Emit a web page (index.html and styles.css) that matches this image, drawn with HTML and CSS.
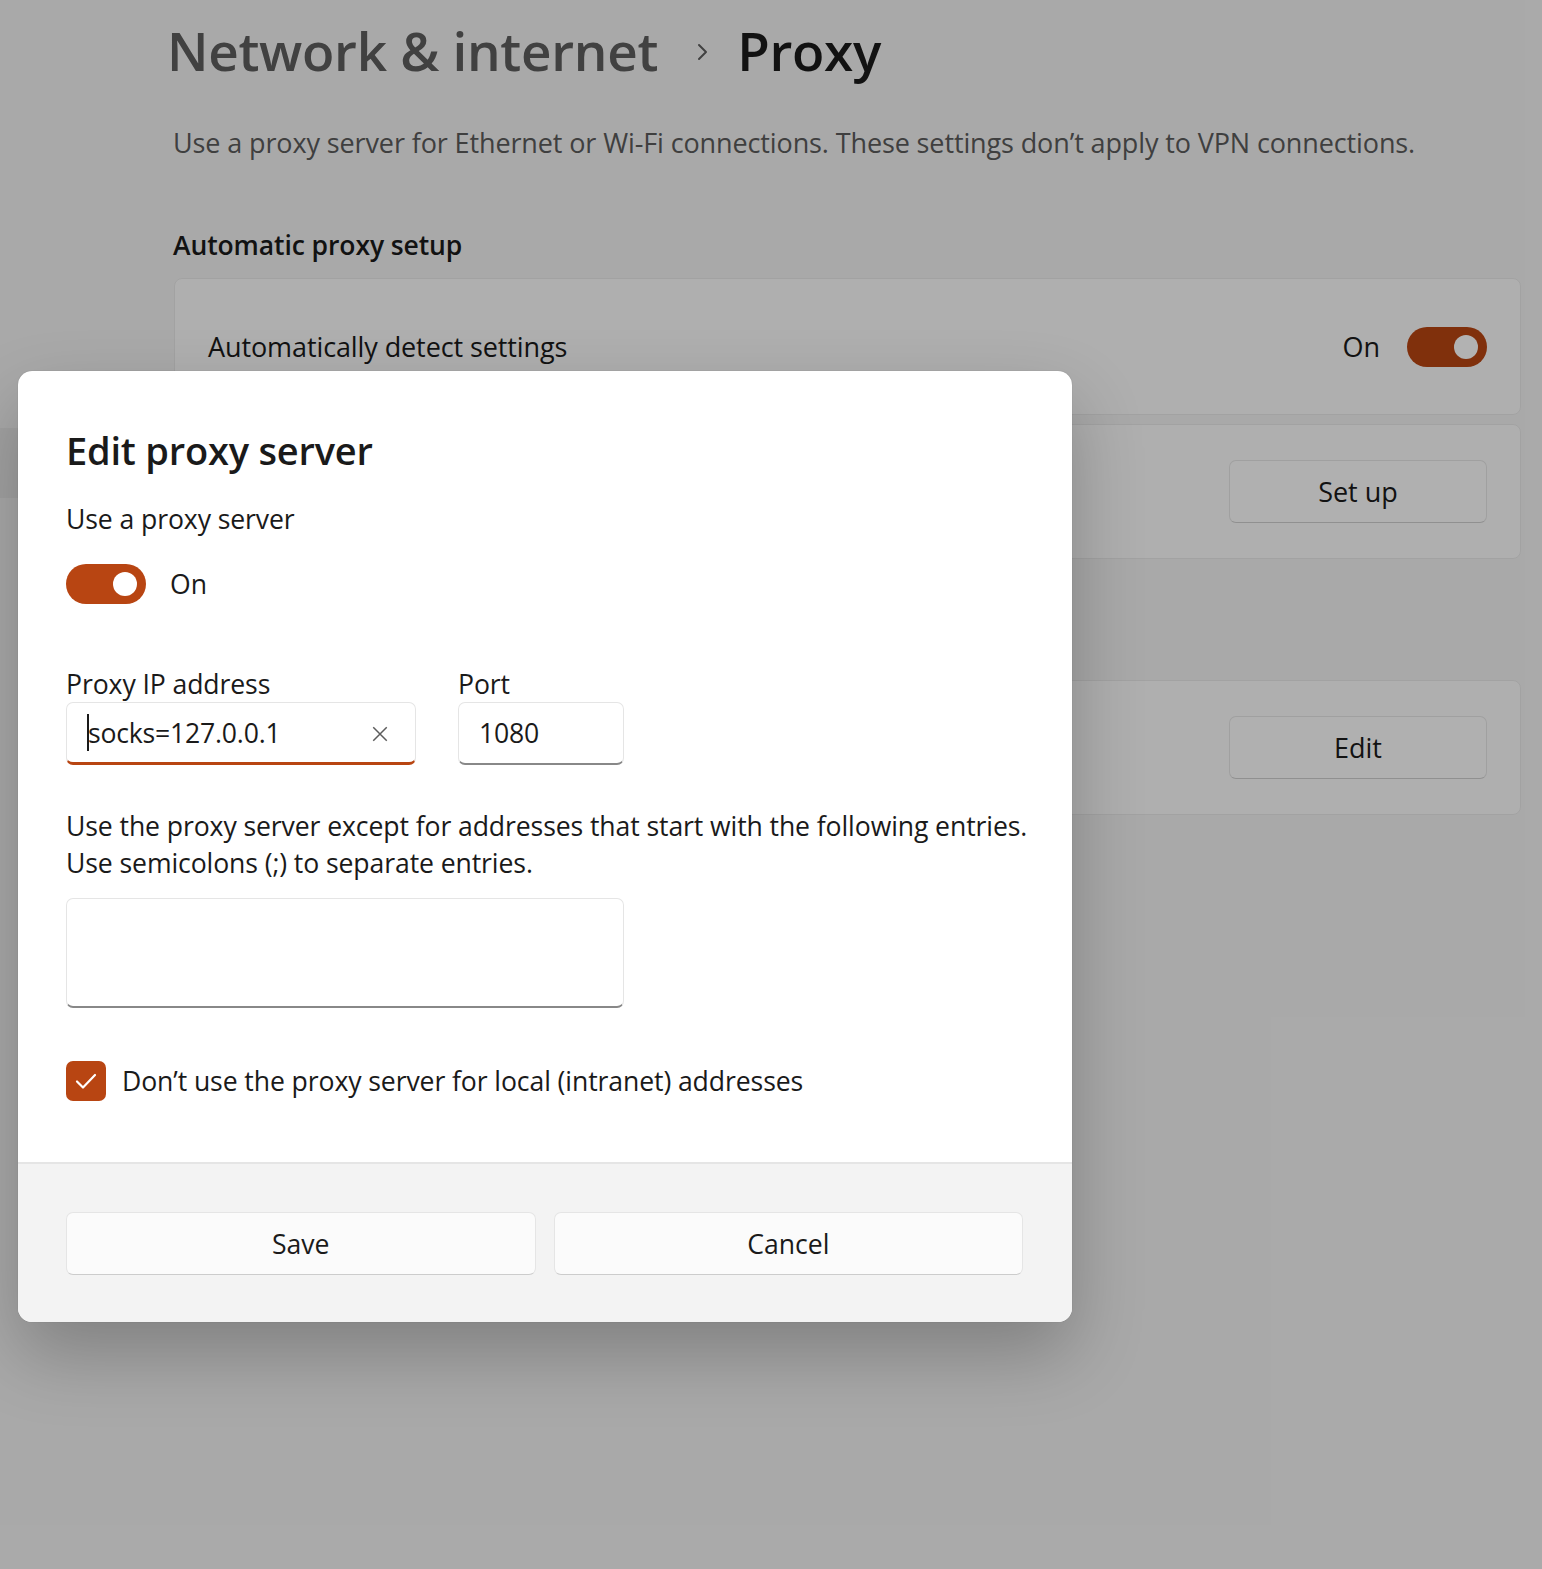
FILE: index.html
```html
<!DOCTYPE html>
<html lang="en">
<head>
<meta charset="utf-8">
<title>Proxy</title>
<link rel="stylesheet" href="styles.css">
</head>
<body>
<div class="app">
  <nav class="nav">
    <div class="nav-item"></div>
  </nav>
  <main class="main">
    <h1 class="crumbs">
      <span class="crumb-parent">Network &amp; internet</span>
      <svg class="chev" viewBox="0 0 16 24" width="16" height="24"><path d="M4 5 L11 12 L4 19" fill="none" stroke="currentColor" stroke-width="2" stroke-linecap="round" stroke-linejoin="round"/></svg>
      <span class="crumb-current">Proxy</span>
    </h1>
    <p class="desc">Use a proxy server for Ethernet or Wi-Fi connections. These settings don’t apply to VPN connections.</p>
    <h2 class="section">Automatic proxy setup</h2>
    <div class="card">
      <span class="card-label">Automatically detect settings</span>
      <div class="card-ctl"><span class="state">On</span><span class="toggle bg-toggle"><span class="knob"></span></span></div>
    </div>
    <div class="card card-b card-end">
      <button class="btn-bg">Set up</button>
    </div>
    <div class="section-gap"></div>
    <div class="card card-b card-end">
      <button class="btn-bg">Edit</button>
    </div>
  </main>
  <div class="overlay"></div>
  <div class="dialog">
    <div class="dlg-body">
      <h2 class="dlg-title">Edit proxy server</h2>
      <div class="dlg-label">Use a proxy server</div>
      <div class="toggle-row"><span class="toggle dlg-toggle"><span class="knob"></span></span><span class="toggle-text">On</span></div>
      <div class="fields">
        <div class="field">
          <div class="field-label">Proxy IP address</div>
          <div class="input input-focus"><span class="caret"></span><span class="input-text">socks=127.0.0.1</span>
            <svg class="clear" viewBox="0 0 16 16" width="18" height="18"><path d="M2 2 L14 14 M14 2 L2 14" stroke="#5c5c5c" stroke-width="1.3" fill="none"/></svg>
          </div>
        </div>
        <div class="field">
          <div class="field-label">Port</div>
          <div class="input input-port"><span class="input-text">1080</span></div>
        </div>
      </div>
      <p class="dlg-para">Use the proxy server except for addresses that start with the following entries.<br>Use semicolons (;) to separate entries.</p>
      <div class="textarea"></div>
      <div class="check-row">
        <span class="checkbox"><svg viewBox="0 0 40 40" width="40" height="40"><path d="M11 20.5 L17 26.5 L29 14" fill="none" stroke="#fff" stroke-width="2.2" stroke-linecap="round" stroke-linejoin="round"/></svg></span>
        <span class="check-text">Don’t use the proxy server for local (intranet) addresses</span>
      </div>
    </div>
    <div class="dlg-footer">
      <button class="btn">Save</button>
      <button class="btn">Cancel</button>
    </div>
  </div>
</div>
</body>
</html>
```
FILE: styles.css
```css
* { box-sizing: border-box; }
html, body { margin: 0; padding: 0; }
body {
  width: 1542px;
  height: 1569px;
  overflow: hidden;
  background: #f3f3f3;
  font-family: "Open Sans", "Noto Sans", sans-serif;
  color: #1a1a1a;
}
.app {
  position: relative;
  display: flex;
  width: 1542px;
  height: 1569px;
}
.nav {
  width: 160px;
  flex: none;
  padding-top: 428px;
}
.nav-item {
  height: 70px;
  background: #e9e9e9;
}
.main {
  flex: 1;
  padding: 13px 21px 0 7px;
}
.crumbs {
  margin: 0;
  display: flex;
  align-items: center;
  font-size: 53px;
  font-weight: 600;
  line-height: 76px;
  letter-spacing: -0.3px;
}
.crumb-parent { color: #5d5d5d; }
.crumb-current { color: #1a1a1a; }
.chev { color: #5d5d5d; margin: 2px 26px 0 37px; }
.desc {
  margin: 36px 0 0 6px;
  font-size: 27px;
  line-height: 36px;
  color: #5b5b5b;
  letter-spacing: -0.12px;
}
.section {
  margin: 66px 0 0 6px;
  font-size: 26.5px;
  font-weight: 600;
  line-height: 36px;
  letter-spacing: -0.1px;
}
.card {
  margin: 15px 0 0 7px;
  height: 137px;
  display: flex;
  align-items: center;
  justify-content: space-between;
  padding: 0 33px;
  background: #fbfbfb;
  border: 1px solid #e9e9e9;
  border-radius: 8px;
}
.card-b { margin-top: 9px; height: 135px; }
.card-end { justify-content: flex-end; }
.section-gap { height: 121px; }
.section-gap + .card-b { margin-top: 0; }
.card-label { font-size: 27px; letter-spacing: -0.1px; }
.card-ctl { display: flex; align-items: center; gap: 27px; }
.state { font-size: 27px; }
.toggle {
  position: relative;
  display: inline-block;
  width: 80px;
  height: 40px;
  border-radius: 20px;
  background: #b84512;
  flex: none;
}
.knob {
  position: absolute;
  right: 9px;
  top: 8px;
  width: 24px;
  height: 24px;
  border-radius: 50%;
  background: #fff;
}
.btn-bg {
  width: 258px;
  height: 63px;
  border: 1px solid #e5e5e5;
  border-bottom-color: #cfcfcf;
  border-radius: 7px;
  background: #fdfdfd;
  font-family: inherit;
  font-size: 27px;
  color: #1a1a1a;
}
.overlay {
  position: absolute;
  inset: 0;
  background: rgba(0, 0, 0, 0.3);
}
.dialog {
  position: absolute;
  left: 18px;
  top: 371px;
  width: 1054px;
  height: 951px;
  background: #fff;
  border-radius: 14px;
  overflow: hidden;
  box-shadow: 0 32px 72px rgba(0, 0, 0, 0.24), 0 0 1px rgba(0, 0, 0, 0.3);
  display: flex;
  flex-direction: column;
}
.dlg-body {
  padding: 51px 30px 61px 48px;
}
.dlg-title {
  margin: 0;
  font-size: 38px;
  font-weight: 600;
  line-height: 56px;
  letter-spacing: -0.2px;
}
.dlg-label {
  margin-top: 22px;
  font-size: 26.6px;
  line-height: 38px;
  letter-spacing: -0.1px;
}
.toggle-row {
  margin-top: 26px;
  display: flex;
  align-items: center;
  gap: 24px;
  height: 40px;
}
.toggle-text { font-size: 26.6px; }
.fields {
  margin-top: 62px;
  display: flex;
  gap: 42px;
}
.field-label {
  font-size: 26.6px;
  line-height: 36px;
  letter-spacing: -0.1px;
}
.input {
  position: relative;
  display: flex;
  align-items: center;
  height: 63px;
  border: 1px solid #e5e5e5;
  border-bottom: 2px solid #888;
  border-radius: 7px;
  background: #fff;
  padding-left: 20px;
  font-size: 26.6px;
}
.input-focus {
  width: 350px;
  border-bottom: 3px solid #b84512;
}
.input-port { width: 166px; }
.input-text { letter-spacing: -0.2px; }
.caret {
  width: 2px;
  height: 37px;
  background: #1a1a1a;
  margin-right: -1px;
}
.clear { position: absolute; right: 26px; top: 22px; }
.dlg-para {
  margin: 43px 0 0 0;
  font-size: 26.6px;
  line-height: 37px;
  letter-spacing: -0.1px;
  white-space: nowrap;
}
.textarea {
  margin-top: 16px;
  width: 558px;
  height: 110px;
  border: 1px solid #e5e5e5;
  border-bottom: 2px solid #888;
  border-radius: 7px;
}
.check-row {
  margin-top: 53px;
  display: flex;
  align-items: center;
  gap: 16px;
}
.checkbox {
  width: 40px;
  height: 40px;
  border-radius: 7px;
  background: #b84512;
  display: flex;
}
.check-text { font-size: 26.6px; letter-spacing: -0.1px; }
.dlg-footer {
  flex: 1;
  border-top: 2px solid #e5e5e5;
  background: #f3f3f3;
  display: grid;
  grid-template-columns: 1fr 1fr;
  gap: 18px;
  padding: 48px 49px 0 48px;
  align-content: start;
}
.btn {
  height: 63px;
  border: 1px solid #e5e5e5;
  border-bottom-color: #cccccc;
  border-radius: 7px;
  background: #fbfbfb;
  font-family: inherit;
  font-size: 26.6px;
  color: #1a1a1a;
}
```
